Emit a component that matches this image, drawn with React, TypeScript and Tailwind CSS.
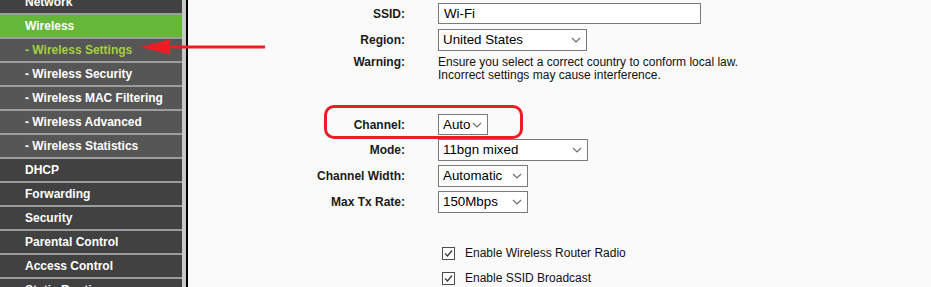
const menu = [
  { label: "Network", kind: "main" },
  { label: "Wireless", kind: "active" },
  { label: "- Wireless Settings", kind: "subActive" },
  { label: "- Wireless Security", kind: "sub" },
  { label: "- Wireless MAC Filtering", kind: "sub" },
  { label: "- Wireless Advanced", kind: "sub" },
  { label: "- Wireless Statistics", kind: "sub" },
  { label: "DHCP", kind: "main" },
  { label: "Forwarding", kind: "main" },
  { label: "Security", kind: "main" },
  { label: "Parental Control", kind: "main" },
  { label: "Access Control", kind: "main" },
  { label: "Static Routing", kind: "main" },
];

const rowBg: Record<string, string> = {
  main: "bg-[#414141] text-white",
  active: "bg-[#64b737] text-white",
  sub: "bg-[#565656] text-white",
  subActive: "bg-[#565656] text-[#a3d03c]",
};

function Chevron() {
  return (
    <svg width="10" height="6" viewBox="0 0 10 6" className="shrink-0">
      <polyline points="1,1 5,5 9,1" fill="none" stroke="#6d6d6d" strokeWidth="1.2" />
    </svg>
  );
}

function Select({ value, width, height = "h-[22px]" }: { value: string; width: string; height?: string }) {
  return (
    <div className={`${width} ${height} flex items-center justify-between border border-[#7a7a7a] bg-white pl-[4px] pr-[5px] text-[13.333px] text-black`}>
      <span>{value}</span>
      <Chevron />
    </div>
  );
}

function Row({ label, children, className = "" }: { label: string; children: React.ReactNode; className?: string }) {
  return (
    <div className={`flex items-center ${className}`}>
      <div className="w-[217px] shrink-0 text-right text-[12px] font-bold text-[#1a1a1a]">{label}</div>
      <div className="ml-[33px]">{children}</div>
    </div>
  );
}

function CheckRow({ label, className = "" }: { label: string; className?: string }) {
  return (
    <div className={`flex h-[16px] items-center pl-[254px] ${className}`}>
      <svg width="13" height="13" viewBox="0 0 13 13">
        <rect x="0.5" y="0.5" width="12" height="12" fill="#fff" stroke="#4d4d4d" />
        <polyline points="3,6.5 5.5,9 10,3.5" fill="none" stroke="#3a3a3a" strokeWidth="1.3" />
      </svg>
      <span className="ml-[10px] text-[12px] text-[#111]">{label}</span>
    </div>
  );
}

export default function App() {
  return (
    <div className="relative flex h-[287px] w-[931px] overflow-hidden bg-[#fafafa] font-['Liberation_Sans',Arial,sans-serif]">
      {/* left menu */}
      <div className="flex shrink-0">
        <div className="-mt-[9px] flex w-[182px] flex-col bg-[#9c9c9c]">
          {menu.map((m, i) => (
            <div
              key={i}
              className={`mb-[2px] flex h-[22px] shrink-0 items-center pl-[25px] text-[12px] font-bold ${rowBg[m.kind]}`}
            >
              {m.label}
            </div>
          ))}
        </div>
        <div className="w-[4px] bg-[#c8c8c8]" />
        <div className="w-[2px] bg-black" />
      </div>

      {/* settings form */}
      <div className="flex flex-col pt-[3px]">
        <Row label="SSID:">
          <div className="flex h-[21px] w-[263px] items-center border border-[#7a7a7a] bg-white pl-[5px] text-[13.333px] text-black">
            Wi-Fi
          </div>
        </Row>
        <Row label="Region:" className="mt-[5px]">
          <Select value="United States" width="w-[149px]" />
        </Row>
        <div className="mt-[5px] flex">
          <div className="w-[217px] shrink-0 text-right text-[12px] font-bold leading-[13px] text-[#1a1a1a]">Warning:</div>
          <div className="ml-[33px] text-[12px] leading-[13px] text-[#111]">
            <div>Ensure you select a correct country to conform local law.</div>
            <div>Incorrect settings may cause interference.</div>
          </div>
        </div>
        <Row label="Channel:" className="mt-[32px]">
          <Select value="Auto" width="w-[50px]" height="h-[21px]" />
        </Row>
        <Row label="Mode:" className="mt-[4px]">
          <Select value="11bgn mixed" width="w-[150px]" />
        </Row>
        <Row label="Channel Width:" className="mt-[4px]">
          <Select value="Automatic" width="w-[90px]" />
        </Row>
        <Row label="Max Tx Rate:" className="mt-[4px]">
          <Select value="150Mbps" width="w-[90px]" />
        </Row>
        <CheckRow label="Enable Wireless Router Radio" className="mt-[32px]" />
        <CheckRow label="Enable SSID Broadcast" className="mt-[9px]" />
      </div>

      {/* annotations */}
      <div className="absolute left-[324px] top-[105px] h-[34px] w-[199px] rounded-[10px] border-[3px] border-[#ee1c25]" />
      <svg className="absolute left-[138px] top-[38px]" width="130" height="18" viewBox="0 0 130 18">
        <line x1="28" y1="9" x2="127" y2="9" stroke="#ee1c25" strokeWidth="3" />
        <polygon points="2,9 32,1.5 32,16.5" fill="#ee1c25" />
      </svg>
    </div>
  );
}
